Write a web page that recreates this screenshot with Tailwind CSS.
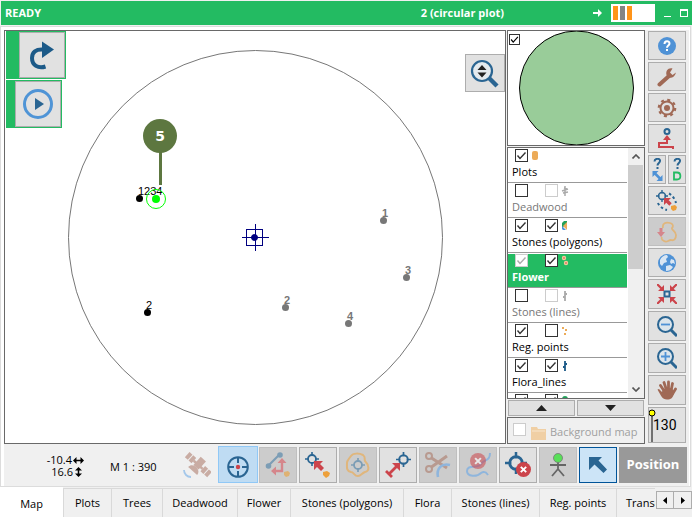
<!DOCTYPE html>
<html lang="en">
<head>
    <meta charset="UTF-8">
    <meta name="viewport" content="width=device-width, initial-scale=1.0">
    <title>Plot map</title>
    <script src="https://cdn.jsdelivr.net/npm/@tailwindcss/browser@4"></script>
</head>
<body class="flex h-screen flex-col overflow-hidden bg-[#f0f0f0] pt-px font-['Open_Sans','Noto_Sans',sans-serif] text-[11px] text-black">
    <!-- Shared symbols -->
    <svg class="hidden">
        <symbol id="check" viewBox="0 0 13 13"><path d="M2.5 6.5 L5 9.5 L10.5 3.5" fill="none" stroke="currentColor" stroke-width="1.4"/></symbol>
        <symbol id="target" viewBox="0 0 14 14"><circle cx="7" cy="7" r="4" fill="none" stroke="currentColor" stroke-width="1.8"/><path d="M7 0v4M7 10v4M0 7h4M10 7h4" stroke="currentColor" stroke-width="1.6"/></symbol>
        <symbol id="cross" viewBox="0 0 14 14"><circle cx="7" cy="7" r="7" fill="#cc444b"/><path d="M4.5 4.5l5 5M9.5 4.5l-5 5" stroke="#fff" stroke-width="1.8"/></symbol>
    </svg>

    <!-- Title bar -->
    <header class="ml-px flex h-6 shrink-0 items-center bg-[#23bb62] pl-1 font-bold text-white">
        <h1 class="flex-1">READY</h1>
        <span>2 (circular plot)</span>
        <svg class="ml-[89px] h-2 w-[10px]" viewBox="0 0 10 8"><path d="M0 3h5V0l4 4-4 4V5H0z" fill="#fff"/></svg>
        <div class="ml-2 flex h-[18px] w-11 gap-[2px] bg-white px-[2px] py-[2px]">
            <div class="w-[5px] bg-[#ff9419]"></div>
            <div class="w-[5px] bg-[#848484]"></div>
            <div class="w-[5px] bg-[#ff9419]"></div>
        </div>
        <button class="ml-[9px] h-2 w-[7px] border-b border-white" aria-label="Minimize"></button>
        <button class="mr-1 ml-[9px] h-2 w-2 border border-t-2 border-white" aria-label="Maximize"></button>
    </header>

    <!-- Main window -->
    <main class="mt-px mr-px flex min-h-0 flex-1 flex-col border border-[#dcdcdc] bg-white pt-[3px] pr-px pl-[3px]">
        <div class="flex min-h-0 flex-1 flex-col bg-[#f0f0f0]">
            <div class="flex min-h-0 flex-1 gap-px">
                <!-- Map canvas -->
                <section class="relative min-w-0 flex-1 border border-[#696969] bg-white">
                    <svg class="h-full w-full" viewBox="0 0 500 412" font-family="Liberation Sans, sans-serif">
                        <circle cx="250.5" cy="206.5" r="187" fill="none" stroke="#777"/>
                        <rect x="154" y="118" width="3" height="36" fill="#5d7740"/>
                        <circle cx="155" cy="105" r="17" fill="#5d7740"/>
                        <text x="155" y="110" text-anchor="middle" font-family="DejaVu Sans, sans-serif" font-size="14" font-weight="bold" fill="#fff">5</text>
                        <circle cx="134.5" cy="167.5" r="3.5"/>
                        <text x="133" y="164" font-size="11">1234</text>
                        <g fill="#00ff00"><circle cx="151" cy="168" r="4"/><circle cx="151" cy="168" r="9.5" fill="none" stroke="#00ff00"/></g>
                        <circle cx="142.5" cy="281.5" r="3.5"/>
                        <text x="141" y="278" font-size="11">2</text>
                        <g stroke="#000080" fill="none"><rect x="241.5" y="198.5" width="16" height="16"/><path d="M237 206.5h27M250.5 193v27"/><circle cx="249.5" cy="206.5" r="3" fill="#000080"/></g>
                        <g fill="#777" font-size="11" font-weight="bold">
                            <circle cx="378.5" cy="189.5" r="3.5"/><text x="377" y="186">1</text>
                            <circle cx="401.5" cy="246.5" r="3.5"/><text x="400" y="243">3</text>
                            <circle cx="280.5" cy="276.5" r="3.5"/><text x="279" y="273">2</text>
                            <circle cx="343.5" cy="292.5" r="3.5"/><text x="342" y="289">4</text>
                        </g>
                    </svg>
                    <div class="absolute top-0 left-px flex flex-col items-start gap-px">
                        <div class="bg-[#23bb62] py-px pr-px pl-[13px]">
                            <button class="block size-[46px] border border-[#adadad] bg-[#e1e1e1]" aria-label="Redo">
                                <svg class="size-11" viewBox="1 1 44 44"><path d="M24 17.5C17 17 13 20 13 26C13 33 19 37 26.500 34.500" fill="none" stroke="#1c5a88" stroke-width="4"/><path d="M23 9.500L35 17.500L23 26z" fill="#1c5a88"/></svg>
                            </button>
                        </div>
                        <div class="bg-[#23bb62] py-px pr-px pl-[9px]">
                            <button class="block size-[46px] border border-[#adadad] bg-[#e1e1e1]" aria-label="Start">
                                <svg class="size-11" viewBox="1 1 44 44"><circle cx="23" cy="23" r="13.500" fill="none" stroke="#4f94d6" stroke-width="3"/><path d="M20 17L29 23L20 29z" fill="#2a6592"/></svg>
                            </button>
                        </div>
                    </div>
                    <button class="absolute top-[23px] right-0 h-[38px] w-10 border border-[#adadad] bg-[#e1e1e1]" aria-label="Zoom extent">
                        <svg class="h-9 w-[38px]" viewBox="1 1 38 36"><circle cx="17" cy="17" r="10" fill="#e4eaee" stroke="#2a6592" stroke-width="2.2"/><path d="M24 24l8 8" stroke="#2a6592" stroke-width="4.500"/><path d="M12.500 16l4.500-5 4.500 5zM12.500 18.500l4.500 5 4.500-5z" fill="#222"/></svg>
                    </button>
                </section>

                <!-- Layers -->
                <aside class="flex w-[138px] flex-col gap-px">
                    <div class="relative h-[116px] border border-[#696969] bg-white">
                        <svg class="h-full w-full" viewBox="0 0 136 114"><circle cx="68.500" cy="57" r="57" fill="#99cc99" stroke="#000"/></svg>
                        <label class="absolute top-[3px] left-px grid">
                            <input type="checkbox" checked aria-label="Overview" class="peer col-start-1 row-start-1 size-[11px] appearance-none border border-[#333] bg-white">
                            <svg class="pointer-events-none col-start-1 row-start-1 hidden size-[11px] peer-checked:block"><use href="#check"/></svg>
                        </label>
                    </div>
                    <div class="flex min-h-0 flex-1 border border-[#696969] bg-white">
                        <ul id="layers" class="min-w-0 flex-1 overflow-hidden"></ul>
                        <div class="ml-px flex w-4 flex-col bg-[#f0f0f0]">
                            <button class="flex h-[17px] w-[15px] items-center justify-center" aria-label="Scroll up"><svg class="h-[5px] w-2" viewBox="0 0 8 5"><path d="M.5 4.500L4 1l3.500 3.500" fill="none" stroke="#555" stroke-width="1.600"/></svg></button>
                            <div class="h-[104px] w-[15px] bg-[#cdcdcd]"></div>
                            <div class="flex-1"></div>
                            <button class="flex h-[17px] w-[15px] items-center justify-center" aria-label="Scroll down"><svg class="h-[5px] w-2" viewBox="0 0 8 5"><path d="M.5 .5L4 4l3.500-3.500" fill="none" stroke="#555" stroke-width="1.600"/></svg></button>
                        </div>
                    </div>
                    <div class="grid h-4 grid-cols-2 gap-[2px] px-px">
                        <button class="flex items-center justify-center border border-[#adadad] bg-[#e1e1e1]" aria-label="Move up"><svg class="h-[6px] w-[11px]" viewBox="0 0 11 6"><path d="M0 6L5.500 0 11 6z" fill="#222"/></svg></button>
                        <button class="flex items-center justify-center border border-[#adadad] bg-[#e1e1e1]" aria-label="Move down"><svg class="h-[6px] w-[11px]" viewBox="0 0 11 6"><path d="M0 0L5.500 6 11 0z" fill="#222"/></svg></button>
                    </div>
                    <div class="flex h-[27px] items-center border border-[#696969] pl-[5px] text-[#a0a0a0]">
                        <input id="background" type="checkbox" class="mb-[3px] size-[13px] appearance-none border border-[#ccc] bg-white">
                        <svg class="mt-1 ml-[5px] h-[14px] w-4" viewBox="0 0 16 14"><path d="M0 1h6l1 2h8v11H0z" fill="#f0cfa4"/><path d="M1 5h13" stroke="#f8e6cd"/></svg>
                        <label for="background" class="mt-[3px] ml-[3px] whitespace-nowrap">Background map</label>
                    </div>
                </aside>

                <!-- Tool column -->
                <div class="mt-px ml-[2px] mr-[3px] flex w-[38px] flex-col gap-[2px] *:shrink-0">
                    <button class="flex h-[29px] items-center justify-center border border-[#adadad] bg-[#e1e1e1]" aria-label="Help">
                        <svg class="size-5" viewBox="0 0 20 20"><circle cx="10" cy="10" r="9" fill="#4f92d6"/><path d="M7.500 8c0-3.500 5-3.500 5-.5 0 2-2.500 2-2.500 4.200" fill="none" stroke="#fff" stroke-width="2"/><rect x="9" y="13" width="2" height="2" fill="#fff"/></svg>
                    </button>
                    <button class="flex h-[29px] items-center justify-center border border-[#adadad] bg-[#e1e1e1]" aria-label="Settings">
                        <svg class="size-5" viewBox="0 0 20 20"><path d="M2.500 17.500L12 9" stroke="#a06955" stroke-width="4" stroke-linecap="round"/><path d="M15.500 1.500C11 .5 8.500 4 9.500 8c1.500 4 8 4 9.500-2.500L15.500 8 13 5.500z" fill="#a06955"/></svg>
                    </button>
                    <button class="flex h-[29px] items-center justify-center border border-[#adadad] bg-[#e1e1e1]" aria-label="Configuration">
                        <svg class="size-5" viewBox="0 0 20 20" fill="none" stroke="#a06955"><circle cx="10" cy="10" r="6.500" stroke-width="2"/><circle cx="10" cy="10" r="8.200" stroke-width="2.200" stroke-dasharray="3 3.440"/><circle cx="10" cy="10" r="3" fill="#a06955" stroke="none"/></svg>
                    </button>
                    <button class="flex h-[29px] items-center justify-center border border-[#adadad] bg-[#e1e1e1]" aria-label="Connect device">
                        <svg class="h-[22px] w-5" viewBox="0 0 20 22" fill="none"><circle cx="10" cy="3.500" r="2.500" stroke="#2a6592" stroke-width="2"/><path d="M6 12l4-5 4 5z" fill="#cc444b"/><path d="M10 11v4H2v4h14v2" stroke="#cc444b" stroke-width="2"/></svg>
                    </button>
                    <div class="grid grid-cols-2 gap-[2px]">
                        <button class="flex h-[29px] items-center justify-center border border-[#adadad] bg-[#e1e1e1]" aria-label="Query extent">
                            <svg class="h-[23px] w-3" viewBox="0 0 12 23" fill="none"><path d="M3.500 3.500c0-3.500 6-3.500 5.500-.5C9 5 6.500 5 6.500 7.500M6.500 9v2" stroke="#2a6592" stroke-width="2"/><path d="M3.500 15l6 6" stroke="#4f92d6" stroke-width="2.500"/><path d="M1.500 13h6l-6 6zM11.500 17v6h-6z" fill="#4f92d6"/></svg>
                        </button>
                        <button class="flex h-[29px] items-center justify-center border border-[#adadad] bg-[#e1e1e1]" aria-label="Query data">
                            <svg class="h-[23px] w-3" viewBox="0 0 12 23" fill="none"><path d="M3.500 3.500c0-3.500 6-3.500 5.500-.5C9 5 6.500 5 6.500 7.500M6.500 9v2" stroke="#2a6592" stroke-width="2"/><path d="M3 14.500h3c4.500 0 4.500 7 0 7H3z" stroke="#23bb62" stroke-width="1.800"/></svg>
                        </button>
                    </div>
                    <button class="flex h-[29px] items-center justify-center border border-[#adadad] bg-[#e1e1e1]" aria-label="Select points">
                        <svg class="h-[21px] w-[22px]" viewBox="0 0 22 21"><g color="#2a6592"><use href="#target" x="0" y="0" width="12" height="12"/></g><path d="M13 3.500C16 5 19 9 20 13M2 13c1 3 5 6 9 7" fill="none" stroke="#2a6592" stroke-width="2" stroke-dasharray="2.500 2.500"/><path d="M8 8h7l-2.300 2.300 3 3-2.400 2.400-3-3L8 15z" fill="#cc444b"/><path d="M15 16l4-1 2 2-1 3-3 1-2-2z" fill="#eda03b"/></svg>
                    </button>
                    <button class="flex h-[29px] items-center justify-center border border-[#bfbfbf] bg-[#ccc]" aria-label="Import polygon" disabled>
                        <svg class="h-[22px] w-5" viewBox="0 0 20 22"><path d="M6 7C5 2 9 1 13 2c4 1 3 4 2 5-1 2 4 3 4 7s-2 6-5 5c-3 0-4 3-7 1-2-1-3-2-2-4" fill="none" stroke="#e0b67c" stroke-width="1.800"/><path d="M2.500 7h3v4H8l-4 5-4-5h2.500z" fill="#d5868b"/></svg>
                    </button>
                    <button class="flex h-[29px] items-center justify-center border border-[#adadad] bg-[#e1e1e1]" aria-label="Web map">
                        <svg class="size-5" viewBox="0 0 20 20"><circle cx="10" cy="10" r="9" fill="#4f92d6"/><path d="M3 7c1-3 4-5 7-5l1 2-2 2 1 3-3 1-2 3-2-2zM14 6l3 1 1 4-2-1-2 1-1-2zM9 13l4-1 3 2c-2 3-4 4-7 4z" fill="#d9e6f3"/></svg>
                    </button>
                    <button class="flex h-[30px] items-center justify-center border border-[#adadad] bg-[#e1e1e1]" aria-label="Center map">
                        <svg class="size-5" viewBox="0 0 20 20"><rect x="7.500" y="7.500" width="5" height="5" fill="none" stroke="#2a6592" stroke-width="2"/><path d="M0 0l5 5M20 0l-5 5M0 20l5-5M20 20l-5-5" stroke="#cc444b" stroke-width="2.200"/><path d="M7 1v6H1zM13 1v6h6zM7 19v-6H1zM13 19v-6h6z" fill="#cc444b"/></svg>
                    </button>
                    <button class="flex h-[30px] items-center justify-center border border-[#adadad] bg-[#e1e1e1]" aria-label="Zoom out">
                        <svg class="h-[22px] w-5" viewBox="0 0 20 22"><circle cx="8.500" cy="9.500" r="7.500" fill="#dce5ec" stroke="#2a6592" stroke-width="2"/><path d="M14 15l6 6" stroke="#2a6592" stroke-width="3"/><path d="M4 9.500h9" stroke="#4f92d6" stroke-width="1.800"/></svg>
                    </button>
                    <button class="flex h-[30px] items-center justify-center border border-[#adadad] bg-[#e1e1e1]" aria-label="Zoom in">
                        <svg class="h-[22px] w-5" viewBox="0 0 20 22"><circle cx="8.500" cy="9.500" r="7.500" fill="#dce5ec" stroke="#2a6592" stroke-width="2"/><path d="M14 15l6 6" stroke="#2a6592" stroke-width="3"/><path d="M4 9.500h9M8.500 5v9" stroke="#4f92d6" stroke-width="1.800"/></svg>
                    </button>
                    <button class="flex h-[30px] items-center justify-center border border-[#adadad] bg-[#e1e1e1]" aria-label="Pan">
                        <svg class="size-5" viewBox="0 0 20 20" stroke="#a06955" stroke-linecap="round"><path d="M3.500 5.500l4 6M7 2.500L9.500 10M11.500 2v8M15.500 3.500L14 11M18.500 9L15.500 14" stroke-width="2.800"/><path d="M.5 9.500l1.500-.5L5 12l1-3 9-1 2 5c-1 5-3 6.500-7 6.500-5 0-6-4-9.500-10z" fill="#a06955" stroke="none"/></svg>
                    </button>
                    <button class="flex h-9 items-center border border-[#adadad] bg-[#e1e1e1] font-[Roboto,sans-serif] text-[14px]" aria-label="Pin size 130">
                        <svg class="h-[33px] w-[7px] shrink-0" viewBox="0 0 7 33"><path d="M3 5v28" stroke="#000"/><circle cx="3" cy="4" r="3" fill="#ff0" stroke="#000"/></svg>
                        <span class="-ml-[3px]">130</span>
                    </button>
                </div>
            </div>

            <!-- Bottom toolbar -->
            <div class="flex h-[42px] items-center gap-[2px] pr-[2px] *:shrink-0">
                <div class="w-20 pt-[2px] text-right leading-[12px]">
                    <div class="flex items-center justify-end gap-px">-10.4<svg class="h-[7px] w-[11px]" viewBox="0 0 11 7"><path d="M2 3.500h7" stroke="#000" stroke-width="1.500"/><path d="M0 3.500L3.500 0v7zM11 3.500L7.500 0v7z"/></svg></div>
                    <div class="flex items-center justify-end gap-[2px] pr-[2px]">16.6<svg class="h-[10px] w-[7px]" viewBox="0 0 7 10"><path d="M3.500 2v6" stroke="#000" stroke-width="1.500"/><path d="M3.500 0L0 3.500h7zM3.500 10L0 6.500h7z"/></svg></div>
                </div>
                <span class="ml-6 flex-1 pt-1 whitespace-nowrap">M 1 : 390</span>
                <svg class="mr-[5px] h-[26px] w-7" viewBox="0 0 28 26">
                    <g fill="#c9aca3" transform="rotate(42 15 13)">
                        <rect x="0" y="9" width="4" height="7"/><rect x="5" y="9" width="4" height="7"/>
                        <rect x="21" y="9" width="4" height="7"/><rect x="26" y="9" width="4" height="7"/>
                        <rect x="9" y="11.500" width="12" height="2.500"/><rect x="11.500" y="5" width="7" height="11"/>
                        <path d="M9 21c0-7 12-7 12 0z"/>
                    </g>
                    <path d="M1 18c0 4 3 7 7 7" fill="none" stroke="#a5c8ea" stroke-width="1.800"/>
                </svg>
                <button class="-mr-px mb-px flex h-[37px] w-10 items-center justify-center border border-[#90c8f6] bg-[#bfdcf3]" aria-label="Locate">
                    <svg class="mt-1 size-[22px]" viewBox="0 0 22 22"><circle cx="11" cy="11" r="9.800" fill="none" stroke="#2a6592" stroke-width="2"/><path d="M11 1v6M11 15v6M1 11h6M15 11h6" stroke="#2a6592" stroke-width="2"/><circle cx="11" cy="11" r="2.200" fill="#cc444b"/></svg>
                </button>
                <button class="flex h-9 w-[38px] items-center justify-center border border-[#bfbfbf] bg-[#ccc]" aria-label="Edit vertex" disabled>
                    <svg class="size-[26px]" viewBox="0 0 26 26"><path d="M4 13L14 3" stroke="#7c9db5" stroke-width="2.200"/><g fill="#7c9db5"><circle cx="3.500" cy="14" r="2.800"/><circle cx="15" cy="3" r="2.800"/></g><path d="M10 19h7V9" fill="none" stroke="#d5868b" stroke-width="2.400"/><path d="M17 6l4.500 5h-9zM6 19l5-4.500v9z" fill="#d5868b"/><path d="M19 20l4-1 2 2-1 3-3 1-2-2z" fill="#dfb273"/></svg>
                </button>
                <button class="flex h-9 w-[38px] items-center justify-center border border-[#adadad] bg-[#e1e1e1]" aria-label="Select nearest">
                    <svg class="size-[26px]" viewBox="0 0 26 26"><g color="#2a6592"><use href="#target" x="0" y="0" width="14" height="14"/></g><path d="M9 9h9l-3 3 4 4-3 3-4-4-3 3z" fill="#cc444b"/><path d="M18 20l4-1 3 2-1 3-3 2-3-3z" fill="#eda03b"/></svg>
                </button>
                <button class="flex h-9 w-[38px] items-center justify-center border border-[#bfbfbf] bg-[#ccc]" aria-label="Polygon center" disabled>
                    <svg class="size-[26px]" viewBox="0 0 26 26"><path d="M6 4c2-3 8-3 12-1 3 2 1 4 2 6 4 4 5 10 0 11-3 1-4 4-7 4-4 0-4-4-7-4-5-1-4-5-4-9 0-3 2-4 4-7z" fill="none" stroke="#e0b67c" stroke-width="2"/><g color="#7c9db5"><use href="#target" x="6" y="6" width="14" height="14"/></g></svg>
                </button>
                <button class="flex h-9 w-[38px] items-center justify-center border border-[#adadad] bg-[#e1e1e1]" aria-label="Measure">
                    <svg class="size-[26px]" viewBox="0 0 26 26"><g color="#2a6592"><use href="#target" x="11" y="0" width="15" height="15"/></g><path d="M4 22l8-8M1 19l6 6" stroke="#cc444b" stroke-width="2.800"/><path d="M7 11h8v8z" fill="#cc444b"/></svg>
                </button>
                <button class="flex h-9 w-[38px] items-center justify-center border border-[#bfbfbf] bg-[#ccc]" aria-label="Cut" disabled>
                    <svg class="size-[26px]" viewBox="0 0 26 26" fill="none"><g stroke="#b89a90" stroke-width="2"><circle cx="4" cy="4" r="3"/><circle cx="4" cy="17" r="3"/><path d="M6.500 6L22 16M6.500 15L22 4" stroke-width="3"/></g><path d="M25 13c-8-2-14 3-12 12" stroke="#8fb5dc" stroke-width="2.600"/></svg>
                </button>
                <button class="flex h-9 w-[38px] items-center justify-center border border-[#bfbfbf] bg-[#ccc]" aria-label="Delete line" disabled>
                    <svg class="size-[26px]" viewBox="0 0 26 26"><path d="M25 1c0 8-5 6-9 11-3 5-14 0-14 7 0 6 10 6 14 2 3-2 5-1 7 2" fill="none" stroke="#8fb5dc" stroke-width="2"/><g opacity=".55"><use href="#cross" x="5" y="1" width="16" height="16"/></g></svg>
                </button>
                <button class="flex h-9 w-[38px] items-center justify-center border border-[#adadad] bg-[#e1e1e1]" aria-label="Delete point">
                    <svg class="size-[26px]" viewBox="0 0 26 26"><g color="#2a6592"><use href="#target" x="0" y="0" width="22" height="22"/></g><use href="#cross" x="11" y="10" width="15" height="15"/></svg>
                </button>
                <button class="flex h-9 w-[38px] items-center justify-center border border-[#bfbfbf] bg-[#ccc]" aria-label="Observer">
                    <svg class="h-6 w-4" viewBox="0 0 16 24"><path d="M0 12h16M8 9v8M8 16L2 23M8 16l6 7" fill="none" stroke="#666" stroke-width="1.800"/><circle cx="8" cy="5" r="4.500" fill="#58e058" stroke="#777" stroke-width=".8"/></svg>
                </button>
                <button class="flex h-9 w-[38px] items-center justify-center border border-[#005499] bg-[#cce4f7]" aria-label="Pointer">
                    <svg class="size-[18px]" viewBox="0 0 18 18"><path d="M0 1h13L9.500 4.500l8.500 9-3.500 3.500-9-8.500L0 14z" fill="#2a6592"/></svg>
                </button>
                <button class="h-9 w-[68px] bg-[#999] text-[13px] font-bold text-white">Position</button>
            </div>
        </div>
    </main>

    <!-- Tabs -->
    <nav class="relative flex h-[30px] shrink-0 overflow-hidden whitespace-nowrap *:shrink-0">
        <button class="w-[63px] bg-white pt-1">Map</button>
        <button class="mt-px w-12 border-t border-l border-[#d9d9d9]">Plots</button>
        <button class="mt-px w-[51px] border-t border-l border-[#d9d9d9]">Trees</button>
        <button class="mt-px w-[75px] border-t border-l border-[#d9d9d9]">Deadwood</button>
        <button class="mt-px w-[53px] border-t border-l border-[#d9d9d9]">Flower</button>
        <button class="mt-px w-[113px] border-t border-l border-[#d9d9d9]">Stones (polygons)</button>
        <button class="mt-px w-12 border-t border-l border-[#d9d9d9]">Flora</button>
        <button class="mt-px w-[88px] border-t border-l border-[#d9d9d9]">Stones (lines)</button>
        <button class="mt-px w-[77px] border-t border-l border-[#d9d9d9]">Reg. points</button>
        <button class="mt-px w-[77px] border-t border-l border-[#d9d9d9] pl-[9px] text-left">Transects</button>
        <div class="absolute top-0 right-0 flex h-full items-start bg-[#f0f0f0] pt-1 pl-px">
            <button class="flex h-[18px] w-[18px] items-center justify-center border border-[#adadad]" aria-label="Previous tabs"><svg class="h-[7px] w-1" viewBox="0 0 4 7"><path d="M4 0v7L0 3.500z"/></svg></button>
            <button class="flex h-[18px] w-[18px] items-center justify-center border border-l-0 border-[#adadad]" aria-label="Next tabs"><svg class="h-[7px] w-1" viewBox="0 0 4 7"><path d="M0 0v7l4-3.500z"/></svg></button>
        </div>
    </nav>

    <script>
        const line = c => `<path d="M4 1v10M4 4h2M2 7h2" stroke="${c}" stroke-width="1.800"/>`;
        const layers = [
            { name: 'Plots', on: true, icon: '<rect x="1" y="1" width="6" height="9" rx="2" fill="#ecab58"/>' },
            { name: 'Deadwood', on: false, edit: false, locked: true, muted: true, icon: '<path d="M4 1v10M1 6l6-2M2 8l5-1M3 3l3 1" stroke="#aaa" stroke-width="1.500"/>' },
            { name: 'Stones (polygons)', on: true, edit: true, icon: '<path d="M1 3l2-2h3v3L1 8z" fill="#23a05a"/><path d="M6 2v8L2 6z" fill="#ecab58"/><path d="M1 6l4 4H2L1 9z" fill="#4f92d6"/>' },
            { name: 'Flower', on: true, onLocked: true, edit: true, active: true, icon: '<g fill="#f5c99a"><circle cx="3" cy="3" r="2.200"/><circle cx="5" cy="8" r="2.200"/></g><g fill="#cc444b"><circle cx="3" cy="3" r=".8"/><circle cx="5" cy="8" r=".8"/></g>' },
            { name: 'Stones (lines)', on: false, edit: false, locked: true, muted: true, icon: line('#aaa') },
            { name: 'Reg. points', on: true, edit: false, icon: '<g fill="#ecab58"><rect x="1" y="2" width="2" height="2"/><rect x="4" y="4" width="2" height="2"/><rect x="3" y="8" width="2" height="2"/></g>' },
            { name: 'Flora_lines', on: true, edit: true, icon: line('#1c5a88') },
            { name: 'Flora', on: true, edit: true, icon: '<circle cx="4" cy="4" r="3" fill="#23a05a"/>' }
        ];

        function checkbox(id, label, checked, locked) {
            const tone = locked ? 'border-[#ccc] text-[#aaa]' : 'border-[#333] text-[#333]';
            return `<span class="grid ${tone}">
                <input id="${id}" type="checkbox" aria-label="${label}" ${checked ? 'checked' : ''} class="peer col-start-1 row-start-1 size-[13px] appearance-none border border-inherit bg-white">
                <svg class="pointer-events-none col-start-1 row-start-1 hidden size-[13px] peer-checked:block"><use href="#check"/></svg>
            </span>`;
        }

        document.getElementById('layers').innerHTML = layers.map((l, i) => {
            const look = l.active ? 'bg-[#23bb62] font-bold text-white' : l.muted ? 'text-[#777]' : '';
            const edit = l.edit === undefined ? '' : `<span class="w-[17px]"></span>${checkbox('edit' + i, 'Edit ' + l.name, l.edit, l.locked)}`;
            return `<li class="h-[35px] border-t border-b border-t-white border-b-[#999] ${look}">
                <div class="flex h-[13px] items-start pl-[7px]">
                    ${checkbox('show' + i, 'Show ' + l.name, l.on, l.onLocked)}${edit}
                    <svg class="mt-px ml-[3px] h-3 w-[9px]" viewBox="0 0 9 12">${l.icon}</svg>
                </div>
                <label for="show${i}" class="block pl-1 leading-[20px]">${l.name}</label>
            </li>`;
        }).join('');
    </script>
</body>
</html>
